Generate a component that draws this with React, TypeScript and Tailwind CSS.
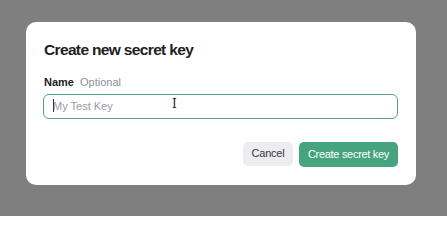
import React from 'react';

const App: React.FC = () => {
  return (
    <div className="w-[447px] h-[216px] bg-[#7f7f7f] overflow-hidden pt-[22px] pl-[26px] font-['Liberation_Sans',Arial,sans-serif]">
      <div className="w-[390px] h-[163px] bg-white rounded-[10px] pt-[18px] pl-[17px] pr-[18px] flex flex-col">
        <h2 className="pl-[1px] text-[15.5px] leading-[20px] font-bold text-[#202123] tracking-[-0.65px]">
          Create new secret key
        </h2>
        <div className="mt-[14px] flex items-baseline gap-[6px] pl-[1px] text-[11px] leading-[16px]">
          <span className="font-bold text-[#202123]">Name</span>
          <span className="text-[#8e8ea0]">Optional</span>
        </div>
        <div className="relative mt-[3px]">
          <input
            className="w-full h-[25px] rounded-[6px] border-[1.5px] border-[#55a085] px-[9px] text-[11px] text-[#353740] placeholder:text-[#9a9aa8] outline-none"
            placeholder="My Test Key"
          />
          <span className="absolute left-[10px] top-[6px] h-[13px] w-px bg-[#353740]" />
          <span className="absolute left-[129px] top-[4px] text-[12px] leading-[14px] text-[#202123] font-['DejaVu_Serif',serif]">I</span>
        </div>
        <div className="mt-[23px] flex justify-end gap-[6px]">
          <button className="h-[24px] w-[50px] rounded-[5px] bg-[#ececf1] text-[11px] tracking-[-0.2px] text-[#353740]">
            Cancel
          </button>
          <button className="h-[25px] w-[99px] rounded-[5px] bg-[#46a37f] text-[11px] tracking-[-0.3px] text-white">
            Create secret key
          </button>
        </div>
      </div>
    </div>
  );
};

export default App;
